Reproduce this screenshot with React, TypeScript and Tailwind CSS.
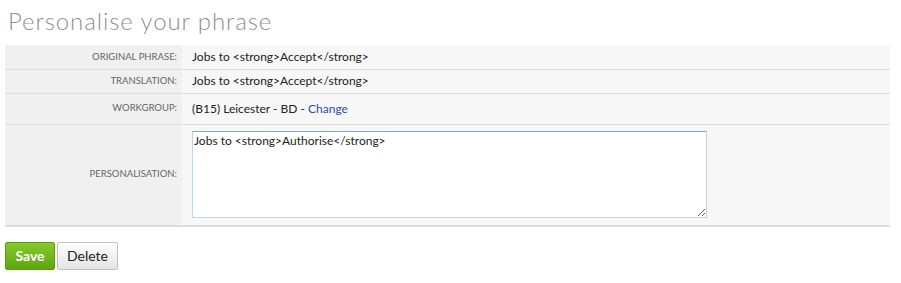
const rows = [
  { label: "Original phrase:", value: "Jobs to <strong>Accept</strong>", h: "h-[24px]" },
  { label: "Translation:", value: "Jobs to <strong>Accept</strong>", h: "h-[24px]" },
];

function App() {
  return (
    <div className="w-[901px] h-[283px] bg-white font-['Lato','Open_Sans',sans-serif] text-[#222]">
      <h1 className="pl-[8px] pt-[7px] h-[45px] text-[24px] leading-[28px] font-light text-[#8f8f8f] tracking-[0.9px]">
        Personalise your phrase
      </h1>
      <table className="ml-[5px] w-[885px] border-collapse text-[12px]">
        <tbody>
          {rows.map((row) => (
            <tr key={row.label} className="border-b border-[#dcdcdc]">
              <td
                className={`w-[177px] ${row.h} bg-[#f0f0f0] pr-[5px] text-right text-[9.5px] uppercase text-[#666]`}
              >
                {row.label}
              </td>
              <td className={`${row.h} bg-[#f7f7f7] pl-[10px]`}>{row.value}</td>
            </tr>
          ))}
          <tr className="border-b border-[#dcdcdc]">
            <td className="w-[177px] h-[31px] bg-[#f0f0f0] pr-[5px] text-right text-[9.5px] uppercase text-[#666]">
              Workgroup:
            </td>
            <td className="h-[31px] bg-[#f7f7f7] pl-[10px]">
              (B15) Leicester - BD - <span className="text-[#2a4f9e]">Change</span>
            </td>
          </tr>
          <tr className="border-b-2 border-[#dcdcdc]">
            <td className="w-[177px] h-[99px] bg-[#f0f0f0] pr-[5px] text-right text-[9.5px] uppercase text-[#666]">
              Personalisation:
            </td>
            <td className="h-[99px] bg-[#f7f7f7] pl-[10px] pt-[6px] pb-[7px] align-top">
              <textarea
                defaultValue="Jobs to <strong>Authorise</strong>"
                className="block w-[515px] h-[87px] bg-white border border-[#b8d7ec] border-t-[#7ba7c9] px-[1px] py-[1px] text-[12px] leading-[16px] text-[#222] outline-none resize"
              />
            </td>
          </tr>
        </tbody>
      </table>
      <div className="flex gap-[2px] pl-[5px] pt-[15px]">
        <button className="w-[50px] h-[28px] rounded-[2px] border border-[#5c9a12] bg-gradient-to-b from-[#86c92a] to-[#5ea70f] text-[14px] font-bold text-white">
          Save
        </button>
        <button className="w-[61px] h-[28px] rounded-[2px] border border-[#c0c0c0] bg-gradient-to-b from-[#ffffff] to-[#e4e4e4] text-[14px] text-[#222]">
          Delete
        </button>
      </div>
    </div>
  );
}

export default App;
